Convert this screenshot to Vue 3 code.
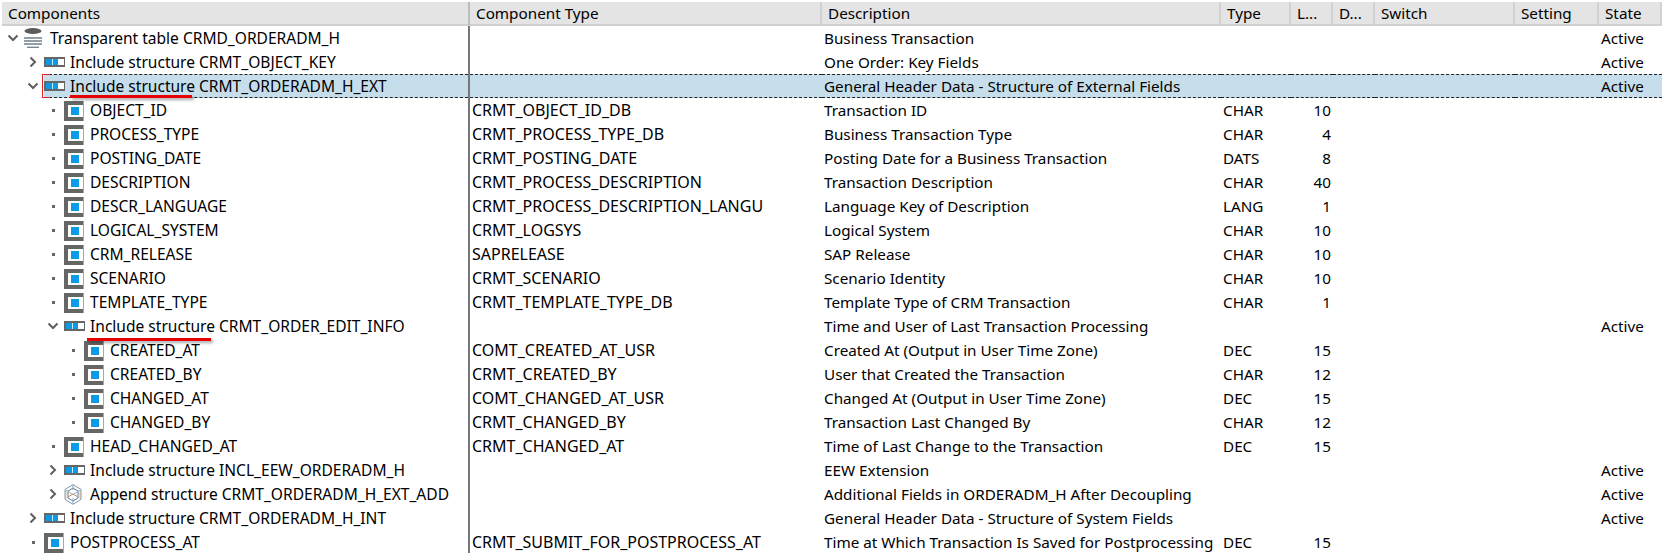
<script setup>
const rows = [
  { l: 0, t: 'open', i: 'db', n: 'Transparent table CRMD_ORDERADM_H', d: 'Business Transaction', s: 'Active' },
  { l: 1, t: 'closed', i: 'inc', n: 'Include structure CRMT_OBJECT_KEY', d: 'One Order: Key Fields', s: 'Active' },
  { l: 1, t: 'open', i: 'inc', n: 'Include structure CRMT_ORDERADM_H_EXT', d: 'General Header Data - Structure of External Fields', s: 'Active', sel: true, mark: 122 },
  { l: 2, t: 'dot', i: 'f', n: 'OBJECT_ID', c: 'CRMT_OBJECT_ID_DB', d: 'Transaction ID', ty: 'CHAR', len: 10 },
  { l: 2, t: 'dot', i: 'f', n: 'PROCESS_TYPE', c: 'CRMT_PROCESS_TYPE_DB', d: 'Business Transaction Type', ty: 'CHAR', len: 4 },
  { l: 2, t: 'dot', i: 'f', n: 'POSTING_DATE', c: 'CRMT_POSTING_DATE', d: 'Posting Date for a Business Transaction', ty: 'DATS', len: 8 },
  { l: 2, t: 'dot', i: 'f', n: 'DESCRIPTION', c: 'CRMT_PROCESS_DESCRIPTION', d: 'Transaction Description', ty: 'CHAR', len: 40 },
  { l: 2, t: 'dot', i: 'f', n: 'DESCR_LANGUAGE', c: 'CRMT_PROCESS_DESCRIPTION_LANGU', d: 'Language Key of Description', ty: 'LANG', len: 1 },
  { l: 2, t: 'dot', i: 'f', n: 'LOGICAL_SYSTEM', c: 'CRMT_LOGSYS', d: 'Logical System', ty: 'CHAR', len: 10 },
  { l: 2, t: 'dot', i: 'f', n: 'CRM_RELEASE', c: 'SAPRELEASE', d: 'SAP Release', ty: 'CHAR', len: 10 },
  { l: 2, t: 'dot', i: 'f', n: 'SCENARIO', c: 'CRMT_SCENARIO', d: 'Scenario Identity', ty: 'CHAR', len: 10 },
  { l: 2, t: 'dot', i: 'f', n: 'TEMPLATE_TYPE', c: 'CRMT_TEMPLATE_TYPE_DB', d: 'Template Type of CRM Transaction', ty: 'CHAR', len: 1 },
  { l: 2, t: 'open', i: 'inc', n: 'Include structure CRMT_ORDER_EDIT_INFO', d: 'Time and User of Last Transaction Processing', s: 'Active', mark: 124 },
  { l: 3, t: 'dot', i: 'f', n: 'CREATED_AT', c: 'COMT_CREATED_AT_USR', d: 'Created At (Output in User Time Zone)', ty: 'DEC', len: 15 },
  { l: 3, t: 'dot', i: 'f', n: 'CREATED_BY', c: 'CRMT_CREATED_BY', d: 'User that Created the Transaction', ty: 'CHAR', len: 12 },
  { l: 3, t: 'dot', i: 'f', n: 'CHANGED_AT', c: 'COMT_CHANGED_AT_USR', d: 'Changed At (Output in User Time Zone)', ty: 'DEC', len: 15 },
  { l: 3, t: 'dot', i: 'f', n: 'CHANGED_BY', c: 'CRMT_CHANGED_BY', d: 'Transaction Last Changed By', ty: 'CHAR', len: 12 },
  { l: 2, t: 'dot', i: 'f', n: 'HEAD_CHANGED_AT', c: 'CRMT_CHANGED_AT', d: 'Time of Last Change to the Transaction', ty: 'DEC', len: 15 },
  { l: 2, t: 'closed', i: 'inc', n: 'Include structure INCL_EEW_ORDERADM_H', d: 'EEW Extension', s: 'Active' },
  { l: 2, t: 'closed', i: 'app', n: 'Append structure CRMT_ORDERADM_H_EXT_ADD', d: 'Additional Fields in ORDERADM_H After Decoupling', s: 'Active' },
  { l: 1, t: 'closed', i: 'inc', n: 'Include structure CRMT_ORDERADM_H_INT', d: 'General Header Data - Structure of System Fields', s: 'Active' },
  { l: 1, t: 'dot', i: 'f', n: 'POSTPROCESS_AT', c: 'CRMT_SUBMIT_FOR_POSTPROCESS_AT', d: 'Time at Which Transaction Is Saved for Postprocessing', ty: 'DEC', len: 15 },
]
const heads = ['Components', 'Component Type', 'Description', 'Type', 'L...', 'D...', 'Switch', 'Setting', 'State']
</script>

<template>
  <div class="page">
    <div class="head">
      <div v-for="h in heads" :key="h" class="hcell">{{ h }}</div>
    </div>
    <div v-for="r in rows" :key="r.n" class="row" :class="{ sel: r.sel }">
      <div class="tree">
        <span class="twisty" :style="{ marginLeft: r.l * 20 + 'px' }">
          <svg v-if="r.t === 'open'" width="14" height="14" viewBox="0 0 14 14"><path d="M2.500 4.500 7 9l4.500-4.500" fill="none" stroke="#5f5f5f" stroke-width="2"/></svg>
          <svg v-else-if="r.t === 'closed'" width="14" height="14" viewBox="0 0 14 14"><path d="M4.500 2.500 9 7l-4.500 4.500" fill="none" stroke="#5f5f5f" stroke-width="2"/></svg>
          <i v-else class="dot"></i>
        </span>
        <div class="node">
          <span class="ico">
            <svg v-if="r.i === 'f'" class="ico-f" width="20" height="20" viewBox="0 0 20 20">
              <rect width="20" height="20" fill="#666"/>
              <rect x="4" y="4" width="15" height="12" fill="#fff"/>
              <rect x="19" y="0" width="1" height="20" fill="#7fb2dc"/>
              <rect x="7" y="6" width="8" height="8" fill="#0a9be4"/>
            </svg>
            <svg v-else-if="r.i === 'inc'" width="21" height="10" viewBox="0 0 21 10">
              <rect width="21" height="10" fill="#666"/>
              <rect x="2" y="2" width="6" height="6" fill="#0a9be4"/>
              <rect x="9" y="2" width="5" height="6" fill="#0a9be4"/>
              <rect x="8" y="2" width="1" height="6" fill="#cfe6f5"/>
              <rect x="14" y="2" width="6" height="6" fill="#fff"/>
            </svg>
            <svg v-else-if="r.i === 'db'" width="18" height="20" viewBox="0 0 18 20">
              <ellipse cx="9" cy="3" rx="8.500" ry="3" fill="#5c5c5c"/>
              <path d="M0 10h18M0 13h18M0 16h18" stroke="#6f7f8c" stroke-width="1.300"/>
              <path d="M3 19.300h12" stroke="#6f7f8c" stroke-width="1.300"/>
            </svg>
            <svg v-else width="18" height="21" viewBox="0 0 18 21" fill="none">
              <path d="M9 .7l8 4.700v10L9 20.300l-8-4.900v-10z" stroke="#7f97ad"/>
              <path d="M9 4l5 3v7l-5 3-5-3V7z" stroke="#5c7a96"/>
              <path d="M1 5.500l8 5 8-5" stroke="#8fb4d4"/>
              <path d="M4 13l5-3 5 3" stroke="#c9915f"/>
              <path d="M2 6v9M16 6v9" stroke="#d3a67e" stroke-width=".8"/>
              <path d="M9 1v5M9 14v6" stroke="#7fa8cc"/>
            </svg>
          </span>
          <span class="name">{{ r.n }}<i v-if="r.mark" class="mark" :style="{ width: r.mark + 'px' }"></i></span>
          <i v-if="r.sel" class="focus"></i>
        </div>
      </div>
      <div class="cell wide">{{ r.c }}</div>
      <div class="cell">{{ r.d }}</div>
      <div class="cell">{{ r.ty }}</div>
      <div class="cell num">{{ r.len }}</div>
      <div class="cell"></div>
      <div class="cell"></div>
      <div class="cell"></div>
      <div class="cell">{{ r.s }}</div>
    </div>
  </div>
</template>

<style scoped>
.page {
  width: 1662px;
  height: 553px;
  overflow: hidden;
  background: #fff;
  box-sizing: border-box;
  padding: 2px 0 0 2px;
  font-family: "Noto Sans", sans-serif;
  font-size: 15.25px;
  color: #000;
}
.head, .row {
  display: grid;
  grid-template-columns: 468px 352px 399px 70px 42px 42px 140px 84px 63px;
}
.head {
  height: 24px;
  box-sizing: border-box;
  background: #e4e4e4;
  border-bottom: 2px solid #cfcfcf;
}
.hcell {
  padding-left: 6px;
  line-height: 23px;
  border-right: 2px solid #d2d2d2;
  box-sizing: border-box;
  white-space: nowrap;
}
.hcell:first-child { border-right-color: #bdbdbd; }
.row { height: 24px; line-height: 24px; position: relative; }
.tree {
  display: flex;
  border-right: 2px solid #777;
  box-sizing: border-box;
  white-space: nowrap;
  font-size: 15.55px;
}
.twisty {
  flex: none;
  width: 14px;
  padding-left: 4px;
  margin-right: 4px;
  display: flex;
  align-items: center;
  justify-content: center;
}
.dot { width: 3px; height: 3px; background: #666; display: block; }
.node { flex: 1; display: flex; position: relative; min-width: 0; }
.ico { flex: none; width: 26px; display: flex; align-items: center; }
.ico-f { margin-top: 2px; }
.name { position: relative; }
.cell {
  padding-left: 2px;
  white-space: nowrap;
  overflow: hidden;
}
.wide { font-size: 16px; }
.num { text-align: right; padding: 0 2px 0 0; }
.sel .node, .sel .cell {
  background: #c6deeb;
  border-top: 1px dashed #222;
  border-bottom: 1px dashed #222;
  line-height: 22px;
}
.focus {
  position: absolute;
  left: -2px;
  top: -1px;
  bottom: -1px;
  width: 8px;
  border: 1px solid #e02020;
  border-right: 0;
  box-sizing: border-box;
}
.mark {
  position: absolute;
  left: -3px;
  bottom: -3px;
  height: 3px;
  background: #e60000;
  box-shadow: 2px 2px 3px rgba(0, 0, 0, 0.35);
  z-index: 2;
}
.sel .mark { left: 0; bottom: -1px; }
</style>
